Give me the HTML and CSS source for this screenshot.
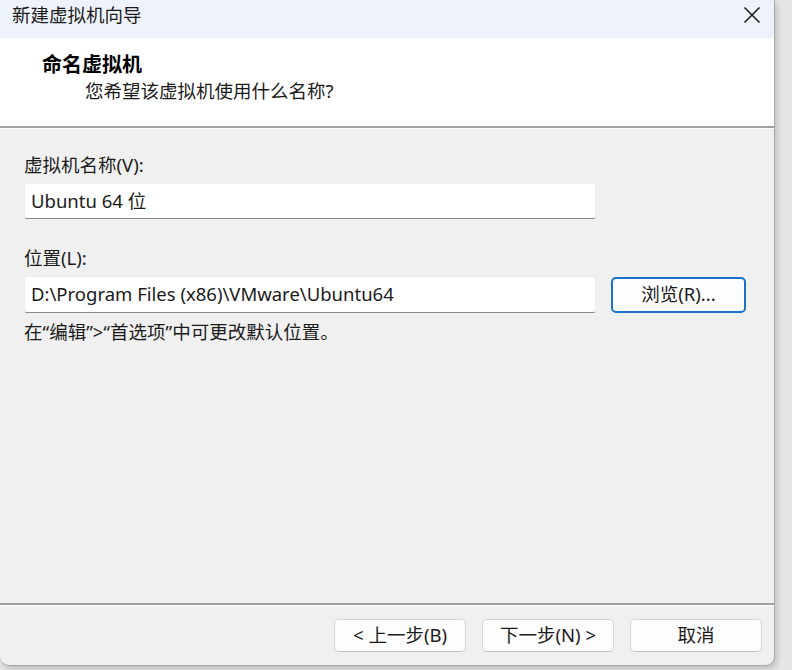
FILE: index.html
```html
<!DOCTYPE html>
<html lang="zh-CN">
<head>
<meta charset="utf-8">
<title>新建虚拟机向导</title>
<link rel="stylesheet" href="styles.css">
</head>
<body>
<div class="window">
  <div class="titlebar">
    <span class="title">新建虚拟机向导</span>
    <span class="close" aria-label="关闭">
      <svg width="18" height="18" viewBox="0 0 18 18"><path d="M1.5 1.5 L16.5 16.5 M16.5 1.5 L1.5 16.5" stroke="#1f1f1f" stroke-width="1.6" fill="none"/></svg>
    </span>
  </div>
  <div class="header">
    <div class="h-title">命名虚拟机</div>
    <div class="h-sub">您希望该虚拟机使用什么名称?</div>
  </div>
  <div class="content">
    <div class="label">虚拟机名称(V):</div>
    <div class="input name">Ubuntu 64 位</div>
    <div class="label second">位置(L):</div>
    <div class="row">
      <div class="input path">D:\Program Files (x86)\VMware\Ubuntu64</div>
      <div class="btn browse">浏览(R)...</div>
    </div>
    <div class="hint">在“编辑”&gt;“首选项”中可更改默认位置。</div>
  </div>
  <div class="footer">
    <div class="btn">&lt; 上一步(B)</div>
    <div class="btn">下一步(N) &gt;</div>
    <div class="btn">取消</div>
  </div>
</div>
</body>
</html>
```
FILE: styles.css
```css
* { box-sizing: border-box; }
html, body { margin: 0; padding: 0; }
body {
  width: 792px;
  height: 670px;
  background: #e6e6e6;
  font-family: "Noto Sans", "Noto Sans CJK SC", sans-serif;
  font-size: 18.5px;
  color: #1b1b1b;
  overflow: hidden;
}
.window {
  width: 775px;
  height: 666px;
  background: #f0f0f0;
  border-right: 1px solid #a9a9a9;
  border-bottom: 1px solid #a9a9a9;
  border-radius: 0 0 9px 9px;
  box-shadow: 2px 3px 6px rgba(0,0,0,0.18);
  display: flex;
  flex-direction: column;
  overflow: hidden;
}
.titlebar {
  height: 38px;
  background: #eef2fa;
  display: flex;
  justify-content: space-between;
  align-items: flex-start;
  padding: 0 13px 0 12px;
}
.title {
  line-height: 30px;
  font-size: 18.5px;
  color: #1a1a1a;
}
.close {
  display: flex;
  margin-top: 6px;
}
.header {
  height: 90px;
  background: #ffffff;
  border-bottom: 2px solid #a0a0a0;
  padding: 13px 0 0 42px;
  box-shadow: 0 1px 0 #ffffff;
}
.h-title {
  font-weight: bold;
  font-size: 20px;
  line-height: 27px;
  color: #000;
}
.h-sub {
  line-height: 25px;
  padding-left: 43px;
  color: #1b1b1b;
}
.content {
  flex: 1;
  padding: 25px 0 0 24px;
  display: flex;
  flex-direction: column;
  align-items: flex-start;
}
.label {
  line-height: 24px;
}
.label.second { margin-top: 27px; }
.input {
  width: 572px;
  height: 36px;
  background: #fff;
  border: 1px solid #ececec;
  border-bottom: 1px solid #8a8a8a;
  border-radius: 3px;
  padding: 0 0 3px 6px;
  display: flex;
  align-items: center;
  margin-top: 6px;
  color: #1b1b1b;
}
.input.path { height: 37px; margin-top: 0; }
.row {
  display: flex;
  align-items: center;
  gap: 15px;
  margin-top: 6px;
}
.btn {
  width: 132px;
  height: 33px;
  background: #fdfdfd;
  border: 1px solid #d5d5d5;
  border-bottom-color: #c2c2c2;
  border-radius: 5px;
  display: flex;
  align-items: center;
  justify-content: center;
  color: #1b1b1b;
  line-height: 1;
}
.btn.browse {
  width: 135px;
  height: 36px;
  border: 2px solid #1a73c8;
}
.hint {
  margin-top: 7px;
  line-height: 24px;
}
.footer {
  height: 62px;
  border-top: 2px solid #a0a0a0;
  box-shadow: inset 0 1px 0 #ffffff;
  display: flex;
  justify-content: flex-end;
  align-items: flex-start;
  gap: 16px;
  padding: 14px 12px 0 0;
}
```
